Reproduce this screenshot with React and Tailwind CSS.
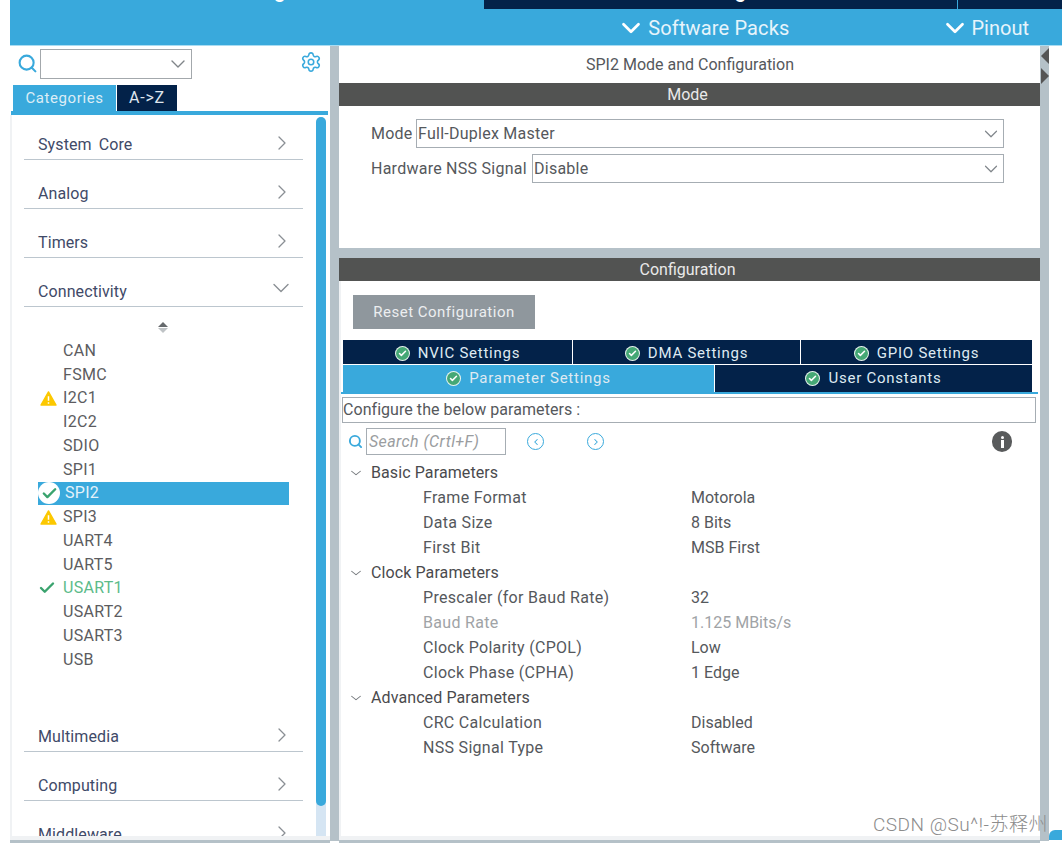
import { Check, ChevronDown, ChevronLeft, ChevronRight, Search, Settings } from "lucide-react";
import React from "react";

const peripherals = [
  { name: "CAN" },
  { name: "FSMC" },
  { name: "I2C1", icon: "warn" },
  { name: "I2C2" },
  { name: "SDIO" },
  { name: "SPI1" },
  { name: "SPI2", icon: "selected" },
  { name: "SPI3", icon: "warn" },
  { name: "UART4" },
  { name: "UART5" },
  { name: "USART1", icon: "ok" },
  { name: "USART2" },
  { name: "USART3" },
  { name: "USB" },
];

const params = [
  { group: "Basic Parameters" },
  { label: "Frame Format", value: "Motorola" },
  { label: "Data Size", value: "8 Bits" },
  { label: "First Bit", value: "MSB First" },
  { group: "Clock Parameters" },
  { label: "Prescaler (for Baud Rate)", value: "32" },
  { label: "Baud Rate", value: "1.125 MBits/s", muted: true },
  { label: "Clock Polarity (CPOL)", value: "Low" },
  { label: "Clock Phase (CPHA)", value: "1 Edge" },
  { group: "Advanced Parameters" },
  { label: "CRC Calculation", value: "Disabled" },
  { label: "NSS Signal Type", value: "Software" },
];

const Warn = () => (
  <svg viewBox="0 0 18 16" className="w-[17px] h-[15px]">
    <path d="M9 1 L17 15 H1 Z" fill="#fcc800" stroke="#fcc800" strokeWidth="1.5" strokeLinejoin="round" />
    <path d="M9 5.5 V10.5 M9 12 V13.5" stroke="#fff" strokeWidth="1.6" />
  </svg>
);

const GreenDot = () => (
  <span className="w-[15px] h-[15px] rounded-full bg-[#e8f5ee] flex items-center justify-center">
    <span className="w-[13px] h-[13px] rounded-full bg-[#45a875] flex items-center justify-center">
      <Check className="w-[9px] h-[9px] text-white" strokeWidth={4} />
    </span>
  </span>
);

const Category = ({ name, open, className = "" }) => (
  <div className={`ml-[14px] w-[279px] h-[49px] border-b border-[#bcc6ce] flex items-end justify-between pl-[14px] pb-[4px] ${open ? "pr-[8px]" : "pr-[9px]"} ${className}`}>
    <span className="text-[16px] leading-[20px] text-[#3f4a68] tracking-[0.1px] [word-spacing:3px]">{name}</span>
    {open ? (
      <ChevronDown className="w-[28px] h-[28px] text-[#8a8f94]" strokeWidth={1.2} />
    ) : (
      <ChevronRight className="w-[24px] h-[24px] text-[#8a8f94] mb-[0.5px]" strokeWidth={1.3} />
    )}
  </div>
);

const TabBtn = ({ label, active, className = "" }) => (
  <div className={`flex items-center justify-center gap-[8px] text-[15px] tracking-[0.75px] text-[#dfeaf2] ${active ? "bg-[#39a9dc]" : "bg-[#032249]"} ${className}`}>
    <GreenDot />
    <span>{label}</span>
  </div>
);

const Sidebar = () => (
  <div className="w-[320px] h-full flex flex-col overflow-hidden">
    <div className="h-[39px] flex items-start pl-[7px] pr-[8px] pt-[3px]">
      <Search className="w-[21px] h-[21px] mt-[4px] text-[#39a9dc]" strokeWidth={2.4} />
      <div className="ml-[2px] w-[152px] h-[30px] border border-[#a3a8ac] flex items-center justify-end pr-[1px]">
        <ChevronDown className="w-[24px] h-[24px] text-[#808589]" strokeWidth={1.4} />
      </div>
      <Settings className="ml-auto w-[22px] h-[22px] mt-[2px] text-[#39a9dc]" strokeWidth={1.7} />
    </div>
    <div className="flex h-[26px] pl-[3px] gap-[1px]">
      <div className="w-[103px] bg-[#39a9dc] text-[#dcedf6] text-[15px] tracking-[0.6px] flex items-center justify-center">Categories</div>
      <div className="w-[60px] bg-[#032249] text-[#dfe6ee] text-[16px] tracking-[0.8px] flex items-center justify-center">A-&gt;Z</div>
    </div>
    <div className="h-[4px] bg-[#39a9dc] ml-[1px] mr-[2px]" />
    <div className="flex-1 relative border-l-2 border-[#f0f2f4] overflow-hidden">
      <div className="-ml-[2px] -mt-[4px]">
        <Category name="System Core" />
        <Category name="Analog" />
        <Category name="Timers" />
        <Category name="Connectivity" open />
        <div className="h-[30px] flex items-end justify-center pr-[15px] pb-[4px]">
          <span className="flex flex-col gap-[1px]">
            <span className="w-0 h-0 border-x-[5px] border-x-transparent border-b-[5px] border-b-[#666a6d]" />
            <span className="w-0 h-0 border-x-[5px] border-x-transparent border-t-[5px] border-t-[#bfc3c6]" />
          </span>
        </div>
        <div className="h-[2px]" />
        {peripherals.map((p) => (
          <div
            key={p.name}
            className={`h-[23.75px] ml-[28px] w-[251px] flex items-center text-[16px] tracking-[0.3px] ${
              p.icon === "selected" ? "bg-[#39a9dc] text-[#e4f2fa]" : p.icon === "ok" ? "text-[#5cbb8a]" : "text-[#5c5c60]"
            }`}
          >
            <span className="w-[25px] flex justify-start shrink-0">
              {p.icon === "warn" && <span className="ml-[2px] flex"><Warn /></span>}
              {p.icon === "ok" && <Check className="w-[18px] h-[18px] text-[#3aa36e]" strokeWidth={3.2} />}
              {p.icon === "selected" && (
                <span className="w-[22px] h-[22px] rounded-full bg-white flex items-center justify-center">
                  <Check className="w-[17px] h-[17px] text-[#3aa36e]" strokeWidth={3.4} />
                </span>
              )}
            </span>
            <span className={p.icon === "selected" ? "ml-[2px]" : ""}>{p.name}</span>
          </div>
        ))}
        <div className="h-[31.5px]" />
        <Category name="Multimedia" />
        <Category name="Computing" />
        <Category name="Middleware" />
      </div>
      {/* scrollbar */}
      <div className="absolute right-[4px] top-[2px] bottom-[4px] w-[10px] rounded-t-md bg-[#d5e5f3]">
        <div className="h-[689px] w-full rounded-full bg-[#39a9dc]" />
      </div>
      <div className="absolute left-0 right-0 bottom-0 h-[4px] bg-[#f0f2f4]" />
    </div>
    <div className="h-[3px] bg-[#b5c1c8] shrink-0" />
    <div className="h-[1px] shrink-0" />
  </div>
);

const ModeRow = ({ label, value, labelClass }) => (
  <div className="flex items-center h-[29px] text-[16px] tracking-[0.25px] text-[#55585c]">
    <span className={`shrink-0 ${labelClass}`}>{label}</span>
    <div className="flex-1 h-full border border-[#a6adb3] flex items-center justify-between pl-[1px] pr-[1px]">
      <span>{value}</span>
      <ChevronDown className="w-[22px] h-[22px] text-[#80868b]" strokeWidth={1.3} />
    </div>
  </div>
);

const SectionBar = ({ title }) => (
  <div className="h-[23px] bg-[#525352] text-[#e9e9e9] text-[16px] pr-[4px] flex items-center justify-center shrink-0">{title}</div>
);

const ParamRow = ({ row }) =>
  row.group ? (
    <div className="h-[25px] flex items-center text-[16px] tracking-[0.1px] text-[#4a4a4d] pl-[6px]">
      <ChevronDown className="w-[14px] h-[14px] text-[#777b7f] scale-x-125 mr-[8px]" strokeWidth={1.5} />
      <span>{row.group}</span>
    </div>
  ) : (
    <div className={`h-[25px] flex items-center text-[16px] pl-[80px] ${row.muted ? "text-[#a0a3a6]" : "text-[#55585c]"}`}>
      <span className="w-[268px] tracking-[0.3px]">{row.label}</span>
      <span>{row.value}</span>
    </div>
  );

const MainPanel = () => (
  <div className="w-[701px] h-full flex flex-col overflow-hidden">
    <div className="h-[37px] flex items-center justify-center text-[16px] text-[#55585c] pl-[1px] pt-[1px] shrink-0">SPI2 Mode and Configuration</div>
    <SectionBar title="Mode" />
    <div className="h-[142px] pl-[32px] pr-[36px] pt-[13px] flex flex-col gap-[6px] shrink-0">
      <ModeRow label="Mode" value="Full-Duplex Master" labelClass="w-[45px]" />
      <ModeRow label="Hardware NSS Signal" value="Disable" labelClass="w-[161px]" />
    </div>
    <div className="h-[10px] bg-[#b5c1c8] shrink-0" />
    <SectionBar title="Configuration" />
    <div className="flex-1 pl-[2px] border-l-2 border-[#f0f2f4]">
      <div className="ml-[10px] mt-[14px] w-[182px] h-[34px] bg-[#8f979d] text-[#eceef0] text-[15px] tracking-[0.5px] flex items-center justify-center">Reset Configuration</div>
      <div className="mt-[11px] w-[689px] flex gap-[1px] h-[24px] [&>div]:pt-[2px]">
        <TabBtn label="NVIC Settings" className="w-[229px]" />
        <TabBtn label="DMA Settings" className="w-[227px]" />
        <TabBtn label="GPIO Settings" className="flex-1" />
      </div>
      <div className="mt-[1px] w-[689px] flex gap-[1px] h-[27px]">
        <TabBtn label="Parameter Settings" active className="w-[371px]" />
        <TabBtn label="User Constants" className="flex-1" />
      </div>
      <div className="-ml-[2px] h-[2px] w-[697px] bg-[#39a9dc]" />
      <div className="-ml-[1px] mt-[3px] w-[694px] h-[26px] border border-[#a6adb3] flex items-center text-[16px] tracking-[0.05px] text-[#55585c]">Configure the below parameters :</div>
      <div className="mt-[5px] h-[27px] flex items-center pl-[5px] w-[669px]">
        <Search className="w-[15px] h-[15px] text-[#39a9dc]" strokeWidth={3} />
        <div className="ml-[3px] w-[140px] h-full border border-[#a6adb3] flex items-center pl-[2px] text-[16px] tracking-[0.4px] italic text-[#9a9da0]">Search (Crtl+F)</div>
        <span className="ml-[21px] w-[17px] h-[17px] rounded-full border-[1.5px] border-[#39a9dc] flex items-center justify-center">
          <ChevronLeft className="w-[10px] h-[10px] text-[#39a9dc]" strokeWidth={2.5} />
        </span>
        <span className="ml-[43px] w-[17px] h-[17px] rounded-full border-[1.5px] border-[#39a9dc] flex items-center justify-center">
          <ChevronRight className="w-[10px] h-[10px] text-[#39a9dc]" strokeWidth={2.5} />
        </span>
        <span className="ml-auto w-[20px] h-[21px] rounded-full bg-[#595b5c] flex items-center justify-center">
          <span className="flex flex-col items-center gap-[1px]">
            <span className="w-[3px] h-[3px] rounded-full bg-white" />
            <span className="w-[3px] h-[8px] bg-white" />
          </span>
        </span>
      </div>
      <div className="mt-[5px]">
        {params.map((r) => (
          <ParamRow key={r.group || r.label} row={r} />
        ))}
      </div>
    </div>
    <div className="h-[4px] bg-[#f0f2f4] shrink-0" />
    <div className="h-[3px] bg-[#b5c1c8] shrink-0" />
    <div className="h-[1px] shrink-0" />
  </div>
);

export default function App() {
  return (
    <div className="relative w-[1062px] h-[844px] bg-white overflow-hidden pl-[10px] flex flex-col font-['Roboto',sans-serif]">
      <div className="h-[46px] bg-[#39a9dc] shrink-0 flex flex-col border-b border-[#a9dcf2]">
        <div className="h-[9px] flex shrink-0 overflow-hidden">
          <div className="w-[474px] flex justify-center text-white text-[20px] leading-[20px] font-medium -mt-[19px]">Pinout &amp; Configuration</div>
          <div className="w-[473px] bg-[#032249] flex justify-center text-white text-[20px] leading-[20px] font-medium h-[9px]">
            <span className="-mt-[19px]">Clock Configuration</span>
          </div>
          <div className="ml-[1px] flex-1 bg-[#032249]" />
        </div>
        <div className="flex-1 flex items-center justify-end pr-[33px] text-[20px] text-[#e7f4fb] pt-[1px]">
          <ChevronDown className="w-[30px] h-[30px] text-white" strokeWidth={2.2} />
          <span className="ml-[2.5px] tracking-[0.15px]">Software Packs</span>
          <ChevronDown className="ml-[150px] w-[30px] h-[30px] text-white" strokeWidth={2.2} />
          <span className="ml-[2px]">Pinout</span>
        </div>
      </div>
      <div className="flex-1 flex min-h-0">
        <Sidebar />
        <div className="w-[9px] h-[795px] bg-[#b5c1c8] shrink-0" />
        <MainPanel />
        <div className="w-[9px] h-[795px] bg-[#b5c1c8] shrink-0 flex flex-col items-end pt-[2px] gap-[4px]">
          <span className="w-0 h-0 border-y-[8px] border-y-transparent border-r-[8px] border-r-[#555]" />
          <span className="w-0 h-0 border-y-[8px] border-y-transparent border-l-[8px] border-l-[#555] self-start ml-[1px]" />
        </div>
      </div>
      {/* bottom right scroll thumb */}
      <div className="absolute right-0 top-[830px] w-[13px] h-[10px] rounded-tl-md bg-[#39a9dc]" />
      {/* watermark */}
      <div className="absolute left-[873px] top-[813px] text-[19px] leading-[24px] font-light text-[#8c8c8c] tracking-[0.5px] font-['Roboto','Noto_Sans_CJK_SC',sans-serif]">CSDN @Su^!-苏释州</div>
    </div>
  );
}
